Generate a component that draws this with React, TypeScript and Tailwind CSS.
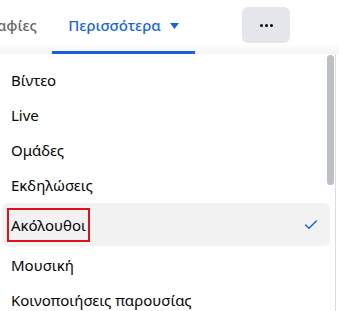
import { Check } from 'lucide-react';

const items = ['Βίντεο', 'Live', 'Ομάδες', 'Εκδηλώσεις'];
const after = ['Μουσική', 'Κοινοποιήσεις παρουσίας'];

export default function App() {
  return (
    <div className="w-[339px] h-[311px] overflow-hidden bg-white font-['Noto_Sans',sans-serif] text-[#050505]">
      {/* TABS */}
      <div className="relative h-[54px] flex items-start bg-gradient-to-b from-white from-80% to-[#f4f4f4]">
        <div className="w-[37px] h-[51px] flex items-center justify-end overflow-hidden whitespace-nowrap text-[15px] font-medium text-[#65676b]">
          <span>Φωτογραφίες</span>
        </div>
        <div className="w-[143px] ml-[15px] h-[54px] flex flex-col">
          <div className="flex-1 flex items-center justify-center gap-[9px] text-[15px] font-medium text-[#1b66d6] whitespace-nowrap">
            <span>Περισσότερα</span>
            <svg width="9" height="6" viewBox="0 0 9 6"><path d="M0 0h9L4.5 6z" fill="#1b66d6" /></svg>
          </div>
          <div className="h-[3px] bg-[#1b5fd9]" />
        </div>
        <div className="ml-[47px] mt-[7px] w-[48px] h-[36px] rounded-[6px] bg-[#e4e6eb] flex items-center justify-center gap-[2px]">
          <span className="w-[3px] h-[3px] rounded-full bg-[#050505]" />
          <span className="w-[3px] h-[3px] rounded-full bg-[#050505]" />
          <span className="w-[3px] h-[3px] rounded-full bg-[#050505]" />
        </div>
      </div>

      {/* DROPDOWN */}
      <div className="relative w-[336px] h-[257px] bg-white border-r border-[#dadde1]">
        <div className="absolute right-[1px] top-[1px] w-[7px] h-[130px] rounded-full bg-[#bcc0c4]" />
        <div className="pt-[9px] pr-[5px] pl-[2px]">
          {items.map(t => (
            <div key={t} className="h-[35px] flex items-center pl-[9px] text-[15px]">{t}</div>
          ))}
          <div className="h-[43px] mb-[2px] rounded-[6px] bg-[#f2f2f2] flex items-center justify-between pl-[5px] pr-[11px]">
            <span className="border-2 border-[#e0101a] px-[2px] py-[5px] text-[15px] leading-[20px]">Ακόλουθοι</span>
            <Check size={16} strokeWidth={2.25} className="text-[#1b66d6]" />
          </div>
          {after.map(t => (
            <div key={t} className="h-[35px] flex items-center pl-[9px] text-[15px]">{t}</div>
          ))}
        </div>
      </div>
    </div>
  );
}
